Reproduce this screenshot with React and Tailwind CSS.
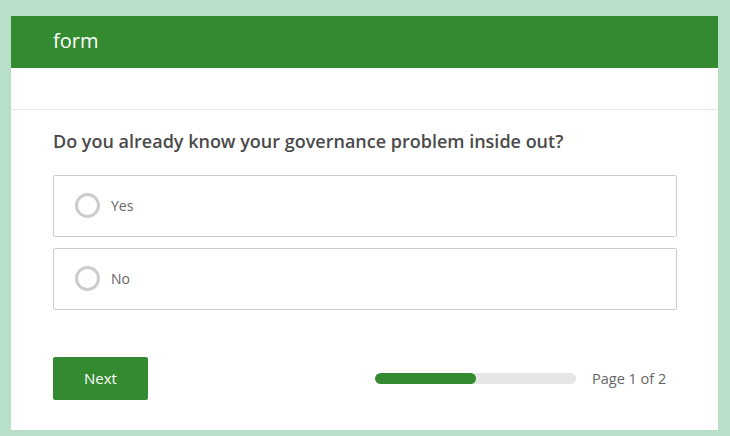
import React, { useState } from 'react';

const options = ['Yes', 'No'];

const App = () => {
  const [selected, setSelected] = useState(null);

  return (
    <div className="w-[730px] h-[436px] bg-[#b7dfc9] pt-4 pl-[11px] font-['Open_Sans',sans-serif]">
      <div className="w-[707px] h-[414px] bg-white flex flex-col">
        {/* Header */}
        <div className="h-[52px] bg-[#338a30] flex items-center px-[42px]">
          <span className="text-white text-[20px] leading-none -mt-[2px]">form</span>
        </div>
        <div className="h-[42px] border-b border-[#e6e6e6]" />

        <div className="px-[42px] pt-[20px]">
          <h2 className="text-[18px] font-semibold text-[#4a4a4a] leading-[22px]">
            Do you already know your governance problem inside out?
          </h2>

          <div className="mt-[23px] flex flex-col gap-[11px] w-[624px]">
            {options.map((opt) => (
              <button
                key={opt}
                onClick={() => setSelected(opt)}
                className="h-[62px] border border-[#cccccc] rounded-[2px] flex items-center pl-[21px] pb-[2px] text-left"
              >
                <span className="w-[25px] h-[25px] rounded-full border-[3px] border-[#cccccc] flex items-center justify-center">
                  {selected === opt && <span className="w-[11px] h-[11px] rounded-full bg-[#338a30]" />}
                </span>
                <span className="ml-[11px] text-[14px] text-[#666666]">{opt}</span>
              </button>
            ))}
          </div>

          <div className="mt-[47px] flex items-center">
            <button className="w-[95px] h-[43px] bg-[#338a30] rounded-[2px] text-white text-[15px]">
              Next
            </button>
            <div className="ml-[227px] w-[201px] h-[11px] rounded-full bg-[#e6e6e6] overflow-hidden">
              <div className="w-1/2 h-full rounded-full bg-[#338a30]" />
            </div>
            <span className="ml-[16px] text-[14.5px] text-[#666666]">Page 1 of 2</span>
          </div>
        </div>
      </div>
    </div>
  );
};

export default App;
